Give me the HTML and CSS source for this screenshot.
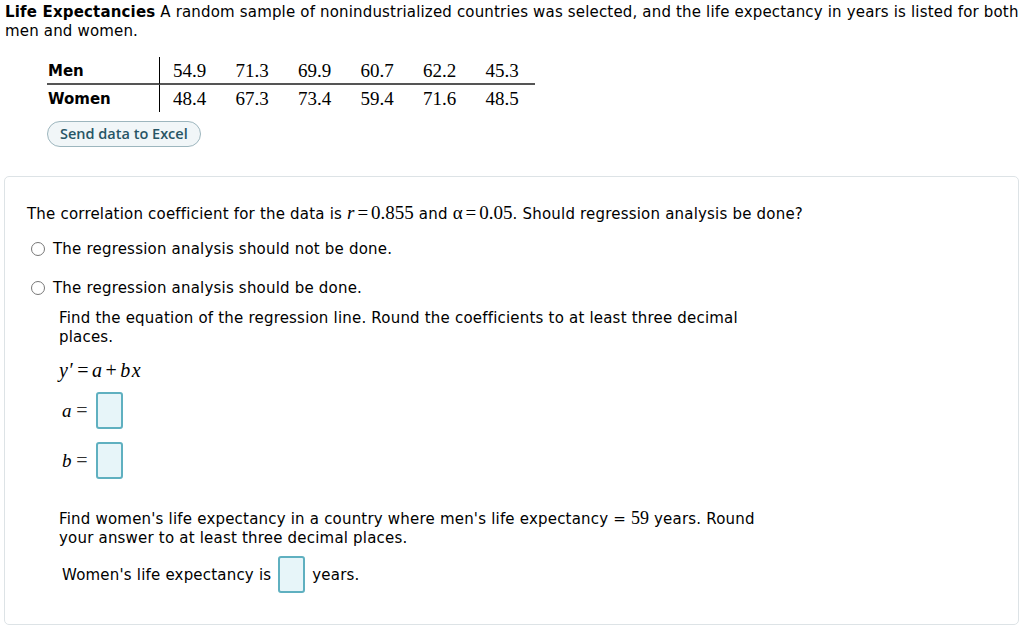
FILE: index.html
```html
<!DOCTYPE html>
<html>
<head>
<meta charset="utf-8">
<link rel="stylesheet" href="styles.css">
</head>
<body>
<div class="intro"><b>Life Expectancies</b> A random sample of nonindustrialized countries was selected, and the life expectancy in years is listed for both<br>men and women.</div>
<div class="data">
  <div class="lab r1">Men</div>
  <div class="val r1">54.9</div><div class="val r1">71.3</div><div class="val r1">69.9</div><div class="val r1">60.7</div><div class="val r1">62.2</div><div class="val r1">45.3</div>
  <div class="lab r2">Women</div>
  <div class="val r2">48.4</div><div class="val r2">67.3</div><div class="val r2">73.4</div><div class="val r2">59.4</div><div class="val r2">71.6</div><div class="val r2">48.5</div>
</div>
<div class="btnrow"><span class="excel">Send data to Excel</span></div>
<div class="card">
  <p class="q">The correlation coefficient for the data is <span class="m"><i>r</i><span class="op">=</span>0.855</span> and <span class="m">α<span class="op">=</span>0.05</span>. Should regression analysis be done?</p>
  <div class="opt"><span class="radio"></span><span>The regression analysis should not be done.</span></div>
  <div class="opt opt2"><span class="radio"></span><span>The regression analysis should be done.</span></div>
  <div class="sub">
    <p class="find">Find the equation of the regression line. Round the coefficients to at least three decimal<br>places.</p>
    <div class="eq"><i>y</i>′<span class="op">=</span><i>a</i><span class="op">+</span><i>b</i><i>x</i></div>
    <div class="coef"><span class="lbl"><i>a</i> <span class="eqs">=</span></span><span class="box"></span></div>
    <div class="coef coef2"><span class="lbl"><i>b</i> <span class="eqs">=</span></span><span class="box"></span></div>
    <p class="find2">Find women's life expectancy in a country where men's life expectancy = <span class="m">59</span> years. Round<br>your answer to at least three decimal places.</p>
    <div class="ans"><span>Women's life expectancy is</span><span class="box"></span><span>years.</span></div>
  </div>
</div>
</body>
</html>
```
FILE: styles.css
```css
html, body { margin: 0; padding: 0; background: #fff; }
body {
  font-family: "DejaVu Sans", Verdana, sans-serif;
  font-size: 15px;
  letter-spacing: 0.2px;
  color: #000;
  padding: 3px 5px 0 5px;
  width: 1014px;
}
.intro { line-height: 19px; white-space: nowrap; letter-spacing: 0.17px; }
.data {
  display: grid;
  grid-template-columns: 113px repeat(6, 62.5px);
  grid-template-rows: 28px 27px;
  width: 488px;
  margin: 16px 0 0 42px;
}
.lab {
  font-weight: bold;
  font-size: 15px;
  letter-spacing: 0;
  padding-left: 1px;
  border-right: 1px solid #000;
  display: flex;
  align-items: center;
}
.val {
  font-family: "Liberation Serif", "Times New Roman", serif;
  font-size: 19px;
  letter-spacing: 0;
  display: flex;
  align-items: center;
  padding-left: 13px;
}
.r1 { border-bottom: 2px solid #555; padding-top: 1px; }
.btnrow { margin: 9px 0 0 42px; height: 26px; }
.excel {
  display: inline-block;
  font-family: "Open Sans", "Liberation Sans", sans-serif;
  font-weight: 600;
  font-size: 14.5px;
  letter-spacing: 0;
  color: #275565;
  background: #f1f6f8;
  border: 1px solid #9db6be;
  border-radius: 14px;
  padding: 3px 12px 3px 12px;
  line-height: 18px;
}
.card {
  margin: 29px 0 0 -1px;
  width: 1015px;
  height: 449px;
  border: 1px solid #dde3e6;
  border-radius: 5px;
  box-sizing: border-box;
  padding: 26px 0 0 22px;
}
p { margin: 0; }
.m { font-family: "Liberation Serif", "Times New Roman", serif; font-size: 19px; letter-spacing: 0; }
.op { margin: 0 3px; }
.q { line-height: 20px; white-space: nowrap; }
.opt { display: flex; align-items: center; gap: 8px; margin-top: 15px; line-height: 20px; }
.opt2 { margin-top: 19px; }
.radio {
  width: 14px; height: 14px;
  box-sizing: border-box;
  border: 1px solid #777;
  border-radius: 50%;
  margin-left: 4px;
}
.sub { padding-left: 32px; }
.find { margin-top: 11px; line-height: 19px; white-space: nowrap; }
.eq {
  font-family: "Liberation Serif", "Times New Roman", serif;
  font-size: 20px;
  margin-top: 12px;
  line-height: 22px;
  letter-spacing: 1.5px;
  padding-left: 0;
}
.eq .op { margin: 0 2px; }
.coef { display: flex; align-items: center; margin-top: 11px; }
.coef2 { margin-top: 13px; }
.lbl {
  font-family: "Liberation Serif", "Times New Roman", serif;
  font-size: 19px;
  letter-spacing: 0;
  width: 37px;
  padding-left: 3px;
  box-sizing: border-box;
}
.eqs { font-size: 20px; color: #333; }
.box {
  display: inline-block;
  width: 27px; height: 37px;
  box-sizing: border-box;
  border: 2px solid #5fb0c0;
  border-radius: 3px;
  background: #e7f5f9;
}
.find2 { margin-top: 30px; line-height: 19px; white-space: nowrap; }
.find2 .m { font-size: 18px; }
.ans { display: flex; align-items: center; gap: 7px; margin-top: 8px; padding-left: 3px; }
```
